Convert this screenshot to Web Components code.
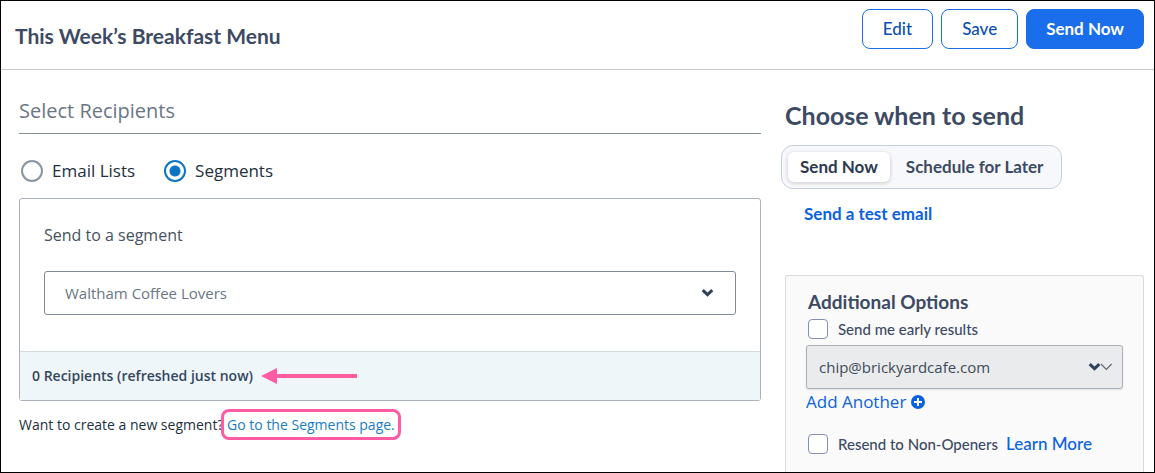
<!DOCTYPE html>
<html lang="en">
<head>
<meta charset="utf-8">
<meta name="viewport" content="width=device-width, initial-scale=1">
<title>This Week’s Breakfast Menu</title>
<style>
  body {
    margin: 0;
    background: #ffffff;
    --ui-font: Lato, "Liberation Sans", sans-serif;
    --text-font: "Open Sans", "Noto Sans", sans-serif;
    --slate: #3d4a63;
    --blue: #1a6eeb;
    --link: #0a62e0;
    --pink: #ff5ca3;
    font-family: var(--text-font);
    color: #22303f;
  }
</style>
</head>
<body>
<send-page>
  <page-header slot="header" heading="This Week’s Breakfast Menu">
    <action-button>Edit</action-button>
    <action-button>Save</action-button>
    <action-button variant="primary">Send Now</action-button>
  </page-header>
  <recipient-picker></recipient-picker>
  <send-options slot="aside"></send-options>
</send-page>

<template id="send-page">
  <style>
    :host {
      box-sizing: border-box;
      display: flex;
      flex-direction: column;
      height: 100vh;
      overflow: hidden;
      border: 1px solid #000000;
    }

    main {
      flex: 1;
      display: grid;
      grid-template-columns: minmax(0, 1fr) 363px;
      gap: 20px;
      padding: 28px 10px 0 18px;
    }

    aside {
      display: grid;
    }
  </style>
  <slot name="header"></slot>
  <main>
    <section><slot></slot></section>
    <aside><slot name="aside"></slot></aside>
  </main>
</template>

<template id="page-header">
  <style>
    header {
      display: flex;
      justify-content: space-between;
      min-height: 68px;
      padding: 0 10px 0 14px;
      border-bottom: 1px solid #c9cbcd;
    }

    h1 {
      align-self: center;
      margin: 2px 0 0;
      font: 700 21px/26px var(--ui-font);
      color: var(--slate);
    }

    div {
      display: flex;
      align-items: flex-start;
      gap: 8px;
      padding-top: 8px;
    }
  </style>
  <header>
    <h1></h1>
    <div><slot></slot></div>
  </header>
</template>

<template id="action-button">
  <style>
    :host {
      display: block;
    }

    button {
      height: 40px;
      padding: 0 20px;
      border: 1px solid var(--blue);
      border-radius: 8px;
      background: #ffffff;
      font: 500 17px/20px var(--ui-font);
      color: #0b4fb3;
      cursor: pointer;
    }

    :host([variant="primary"]) button {
      padding: 0 19px;
      background: var(--blue);
      font-weight: 700;
      color: #ffffff;
    }
  </style>
  <button type="button"><slot></slot></button>
</template>

<template id="recipient-picker">
  <style>
    :host {
      display: block;
    }

    h2 {
      margin: 0;
      padding-bottom: 9px;
      border-bottom: 1px solid #83909c;
      font: 400 20px/26px var(--text-font);
      color: #6a7684;
    }

    .choices {
      display: flex;
      gap: 29px;
      margin: 0;
      padding: 26px 2px 16px;
      border: 0;
    }

    .choices label {
      display: flex;
      align-items: center;
      gap: 9px;
      font-size: 17px;
      line-height: 22px;
    }

    input {
      appearance: none;
      width: 22px;
      height: 22px;
      margin: 0;
      border: 2px solid #8a95a0;
      border-radius: 50%;
      background: #ffffff;
    }

    input:checked {
      border-color: #0d76c4;
      background: radial-gradient(circle, #0d76c4 5px, #ffffff 6px);
    }

    .box {
      border: 1px solid #acb2bc;
      border-radius: 3px;
    }

    .segment {
      display: flex;
      flex-direction: column;
      gap: 24px;
      padding: 24px 24px 36px;
    }

    .segment label {
      font-size: 16px;
      line-height: 24px;
      color: #465261;
    }

    .status {
      display: flex;
      align-items: center;
      gap: 8px;
      padding: 14px 12px;
      border-top: 1px solid #d3dade;
      background: #eef6fa;
      font-size: 14px;
      font-weight: 600;
      line-height: 20px;
      color: #34475e;
    }

    .hint {
      margin: 0;
      padding-top: 14px;
      font-size: 14px;
      line-height: 20px;
    }
  </style>
  <h2>Select Recipients</h2>
  <fieldset class="choices" aria-label="Recipient type">
    <label><input type="radio" name="type">Email Lists</label>
    <label><input type="radio" name="type" checked>Segments</label>
  </fieldset>
  <div class="box">
    <div class="segment">
      <label for="segment">Send to a segment</label>
      <select-box field="segment" option="Waltham Coffee Lovers"></select-box>
    </div>
    <div class="status">
      0 Recipients (refreshed just now)
      <pointer-arrow></pointer-arrow>
    </div>
  </div>
  <p class="hint">Want to create a new segment? <marked-link>Go to the Segments page.</marked-link></p>
</template>

<template id="select-box">
  <style>
    :host {
      display: grid;
      align-items: center;
    }

    select, svg {
      grid-area: 1 / 1;
    }

    select {
      appearance: none;
      width: 100%;
      height: 44px;
      margin: 0;
      padding: 0 20px;
      border: 1px solid #828b99;
      border-radius: 3px;
      background: #ffffff;
      font: 400 15px/20px var(--text-font);
      color: #6a7684;
    }

    svg {
      justify-self: end;
      margin-right: 1px;
      fill: none;
      stroke: #2f4358;
      stroke-width: 3;
      pointer-events: none;
    }

    .thin {
      display: none;
      stroke: #5b6774;
      stroke-width: 1.2;
    }

    :host([variant="muted"]) select {
      padding: 0 12px;
      border-color: #a9b1b9;
      background: #e9ebed;
      box-shadow: 0 1px 2px #0000001a;
      color: #3e4b59;
    }

    :host([variant="muted"]) .thin {
      display: inline;
    }
  </style>
  <select></select>
  <svg width="34" height="10" viewBox="0 0 34 10" aria-hidden="true">
    <path class="bold" d="M1.7 2.2 6.5 6.7l4.8-4.5"/>
    <path class="thin" d="M13 2 18.3 7.3 23.6 2"/>
  </svg>
</template>

<template id="pointer-arrow">
  <style>
    :host {
      display: flex;
    }

    svg {
      fill: var(--pink);
    }
  </style>
  <svg width="96" height="16" viewBox="0 0 96 16" aria-hidden="true">
    <path d="M0 8 16 0v6h80v4H16v6z"/>
  </svg>
</template>

<template id="marked-link">
  <style>
    a {
      border-radius: 2px;
      outline: 3px solid var(--pink);
      outline-offset: 3px;
      color: #1a7bc4;
      text-decoration: none;
    }
  </style>
  <a href="#segments"><slot></slot></a>
</template>

<template id="send-options">
  <style>
    :host {
      display: flex;
      flex-direction: column;
      align-items: flex-start;
      font-family: var(--ui-font);
      color: var(--slate);
    }

    h2 {
      margin: 0;
      padding: 2px 4px 15px;
      font-size: 25px;
      line-height: 30px;
    }

    a {
      color: var(--link);
      text-decoration: none;
    }

    .test {
      padding: 15px 23px 51px;
      font-size: 17px;
      font-weight: 700;
      line-height: 20px;
    }

    .panel {
      box-sizing: border-box;
      flex: 1;
      align-self: stretch;
      margin-left: 4px;
      padding: 14px 20px 0;
      border: 1px solid #d9dcde;
      border-bottom: 0;
      border-radius: 3px 3px 0 0;
      background: #fafafa;
    }

    h3 {
      margin: 0;
      padding: 0 2px 5px;
      font-size: 19px;
      line-height: 24px;
    }

    .add {
      display: flex;
      align-items: center;
      gap: 5px;
      padding: 2px 0 21px;
      font: 400 17px/22px var(--text-font);
    }

    .row {
      display: flex;
      align-items: center;
      gap: 8px;
    }

    .more {
      font-size: 17px;
      font-weight: 500;
      line-height: 20px;
    }

    select-box {
      margin-top: 6px;
    }
  </style>
  <h2>Choose when to send</h2>
  <segmented-control></segmented-control>
  <a class="test" href="#test">Send a test email</a>
  <div class="panel">
    <h3>Additional Options</h3>
    <check-box>Send me early results</check-box>
    <select-box variant="muted" field="address" caption="Results address" option="chip@brickyardcafe.com"></select-box>
    <a class="add" href="#add">Add Another
      <svg width="14" height="14" viewBox="0 0 14 14" aria-hidden="true">
        <circle cx="7" cy="7" r="7" fill="#0a62e0"/>
        <path d="M7 3v8M3 7h8" stroke="#ffffff" stroke-width="2"/>
      </svg>
    </a>
    <div class="row">
      <check-box>Resend to Non-Openers</check-box>
      <a class="more" href="#learn">Learn More</a>
    </div>
  </div>
</template>

<template id="segmented-control">
  <style>
    div {
      display: flex;
      gap: 4px;
      padding: 6px;
      border: 1px solid #c5cde0;
      border-radius: 12px;
      background: #f7f8fc;
    }

    button {
      height: 30px;
      padding: 0 12px;
      border: 0;
      border-radius: 6px;
      background: transparent;
      font: 700 17px/20px var(--ui-font);
      color: var(--slate);
      cursor: pointer;
    }

    button[aria-pressed="true"] {
      background: #ffffff;
      box-shadow: 0 1px 4px #00000033;
      color: #2c394e;
    }
  </style>
  <div role="group" aria-label="Send time">
    <button type="button" aria-pressed="true">Send Now</button>
    <button type="button" aria-pressed="false">Schedule for Later</button>
  </div>
</template>

<template id="check-box">
  <style>
    :host {
      display: block;
    }

    label {
      display: flex;
      align-items: center;
      gap: 10px;
      padding-left: 2px;
      font-size: 15px;
      font-weight: 500;
      line-height: 20px;
    }

    input {
      appearance: none;
      width: 20px;
      height: 20px;
      margin: 0;
      border: 1px solid #8490b3;
      border-radius: 4px;
      background: #ffffff;
    }

    input:checked {
      background: var(--blue);
    }
  </style>
  <label><input type="checkbox"><slot></slot></label>
</template>

<script>
  /**
   * Base class which clones the template named after the element.
   */
  class TemplateElement extends HTMLElement {
    /**
     * Creates an instance of the current type.
     */
    constructor () {
      super()

      // Attach a shadow DOM tree to this element and
      // append the template to the shadow root.
      this.attachShadow({ mode: 'open' })
        .appendChild(document.getElementById(this.localName).content.cloneNode(true))
    }
  }

  customElements.define('page-header',
    class extends TemplateElement {
      /**
       * Called after the element is inserted into the DOM.
       */
      connectedCallback () {
        this.shadowRoot.querySelector('h1').textContent = this.getAttribute('heading')
      }
    }
  )

  customElements.define('select-box',
    class extends TemplateElement {
      /**
       * Called after the element is inserted into the DOM.
       */
      connectedCallback () {
        const select = this.shadowRoot.querySelector('select')
        select.name = this.getAttribute('field')
        select.replaceChildren(new Option(this.getAttribute('option')))

        // A label outside the shadow root can not use "for", so its text is passed on.
        const label = this.getRootNode().querySelector('label[for="' + select.name + '"]')
        select.setAttribute('aria-label', label ? label.textContent : this.getAttribute('caption'))
        if (label) {
          label.addEventListener('click', () => select.focus())
        }
      }
    }
  )

  customElements.define('segmented-control',
    class extends TemplateElement {
      /**
       * Called after the element is inserted into the DOM.
       */
      connectedCallback () {
        const buttons = this.shadowRoot.querySelectorAll('button')
        buttons.forEach((button) => {
          button.addEventListener('click', () => {
            buttons.forEach((other) => other.setAttribute('aria-pressed', String(other === button)))
          })
        })
      }
    }
  )

  /* Elements without behaviour of their own */
  const plain = ['action-button', 'pointer-arrow', 'marked-link', 'check-box', 'recipient-picker', 'send-options', 'send-page']
  plain.forEach((name) => customElements.define(name, class extends TemplateElement {}))
</script>
</body>
</html>
